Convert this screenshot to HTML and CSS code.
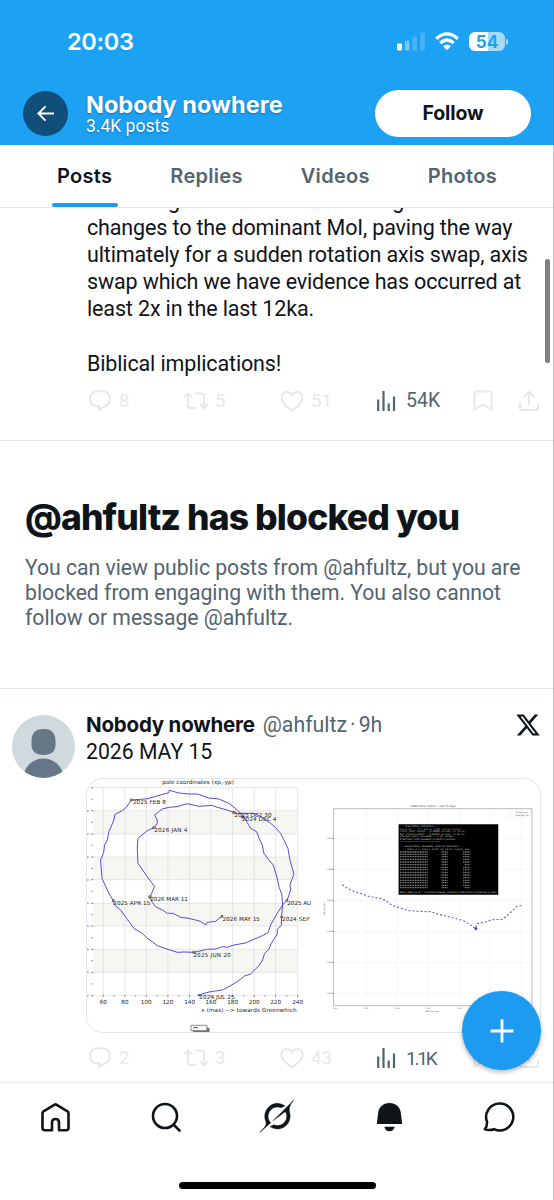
FILE: index.html
```html
<!DOCTYPE html>
<html lang="en">
<head>
<meta charset="utf-8">
<title>Nobody nowhere</title>
<link rel="stylesheet" href="styles.css">
</head>
<body>
<svg class="defs" width="0" height="0">
  <symbol id="reply" viewBox="0 0 24 24"><path fill="currentColor" d="M1.751 10c0-4.42 3.584-8 8.005-8h4.366c4.49 0 8.129 3.64 8.129 8.13 0 2.96-1.607 5.68-4.196 7.11l-8.054 4.46v-3.69h-.067c-4.49.1-8.183-3.51-8.183-8.01zm8.005-6c-3.317 0-6.005 2.69-6.005 6 0 3.37 2.77 6.08 6.138 6.01l.351-.01h1.761v2.3l5.087-2.81c1.951-1.08 3.163-3.13 3.163-5.36 0-3.39-2.744-6.13-6.129-6.13H9.756z"/></symbol>
  <symbol id="repost" viewBox="0 0 26 22"><path fill="none" stroke="currentColor" stroke-width="2" d="M1 7.500 5 3.200 9 7.500M5 4V15.500Q5 18 7.500 18H13M12 3.500H18.500Q21 3.500 21 6V17.500M17 14 21 18.300 25 14"/></symbol>
  <symbol id="heart" viewBox="0 0 24 22"><path fill="none" stroke="currentColor" stroke-width="2" d="M12 20.300C6 16.500 1.500 12.500 1.500 7.800 1.500 4.300 4 2 6.800 2 9.200 2 11 3.400 12 5.200 13 3.400 14.800 2 17.200 2 20 2 22.500 4.300 22.500 7.800 22.500 12.500 18 16.500 12 20.300Z"/></symbol>
  <symbol id="views" viewBox="0 0 19 22"><path fill="none" stroke="currentColor" stroke-width="2.200" d="M1.200 21V9.500M6.500 21V1M11.700 21V13.500M17 21V6.500"/></symbol>
  <symbol id="bookmark" viewBox="0 0 20 22"><path fill="none" stroke="currentColor" stroke-width="2" d="M1.500 19.800V3Q1.500 1.500 3 1.500H17Q18.500 1.500 18.500 3V19.800L10 14.500Z"/></symbol>
  <symbol id="share" viewBox="0 0 22 22"><path fill="none" stroke="currentColor" stroke-width="2" d="M11 15V2.500M5.500 7.500 11 2 16.500 7.500M2 13V18Q2 20 4 20H18Q20 20 20 18V13"/></symbol>
</svg>
<div class="screen">
  <header class="top">
    <div class="status">
      <span class="clock">20:03</span>
      <div class="status-icons">
        <svg class="signal" viewBox="0 0 29 19"><g fill="#fff"><rect x="0" y="11.500" width="5" height="7" rx="1.300"/><rect x="7.800" y="8.500" width="4.600" height="10" rx="1.300" opacity=".4"/><rect x="15.500" y="4.500" width="4.600" height="14" rx="1.300" opacity=".2"/><rect x="23.200" y=".5" width="4.600" height="18" rx="1.300" opacity=".2"/></g></svg>
        <svg class="wifi" viewBox="0 0 24 19"><g fill="none" stroke="#fff" stroke-width="3.200"><path d="M1.200 6.700Q12-3 22.800 6.700"/><path d="M5.200 11Q12 5 18.800 11"/></g><path fill="#fff" d="M12 18.300 8 14.300Q12 10.900 16 14.300Z"/></svg>
        <div class="battery"><span>54</span></div>
        <i class="nub"></i>
      </div>
    </div>
    <div class="profile">
      <div class="back"><svg viewBox="0 0 18 18"><path fill="none" stroke="#fff" stroke-width="2" d="M18 9H1.500M9 1.500 1.500 9 9 16.500"/></svg></div>
      <div class="who"><div class="who-name">Nobody nowhere</div><div class="who-count">3.4K posts</div></div>
      <div class="follow">Follow</div>
    </div>
  </header>
  <nav class="tabs">
    <div class="tab tab-on"><span>Posts</span></div>
    <div class="tab"><span>Replies</span></div>
    <div class="tab"><span>Videos</span></div>
    <div class="tab"><span>Photos</span></div>
  </nav>
  <article class="first">
    <div class="body-text">unloading channels often causing instant<br>changes to the dominant MoI, paving the way<br>ultimately for a sudden rotation axis swap, axis<br>swap which we have evidence has occurred at<br>least 2x in the last 12ka.<br><br>Biblical implications!</div>
    <div class="actions">
      <div class="act c1"><svg class="i-reply"><use href="#reply"/></svg><span>8</span></div>
      <div class="act c2"><svg class="i-repost"><use href="#repost"/></svg><span>5</span></div>
      <div class="act c3"><svg class="i-heart"><use href="#heart"/></svg><span>51</span></div>
      <div class="act c4"><svg class="i-views"><use href="#views"/></svg><span class="long">54K</span></div>
      <div class="act c5"><svg class="i-book"><use href="#bookmark"/></svg></div>
      <div class="act"><svg class="i-share"><use href="#share"/></svg></div>
    </div>
  </article>
  <section class="blocked">
    <h1>@ahfultz has blocked you</h1>
    <p>You can view public posts from @ahfultz, but you are<br>blocked from engaging with them. You also cannot<br>follow or message @ahfultz.</p>
  </section>
  <article class="second">
    <svg class="avatar" viewBox="0 0 63 63"><defs><clipPath id="av"><circle cx="31.500" cy="31.500" r="31.500"/></clipPath></defs><g clip-path="url(#av)"><path fill="#cfd9de" d="M0 0H63V63H0Z"/><path fill="#667788" d="M31.500 14C40 14 43.500 18.500 43.500 26V29C43.500 36 40 40 31.500 40S19.500 36 19.500 29V26C19.500 18.500 23 14 31.500 14Z"/><ellipse cx="31.500" cy="63" rx="20" ry="19.500" fill="#667788"/></g></svg>
    <div class="content">
      <div class="byline"><span class="name">Nobody nowhere</span><span class="handle">@ahfultz</span><span class="dot">·</span><span class="handle">9h</span>
        <svg class="xlogo" viewBox="0 0 24 24"><path d="M18.244 2.250h3.308l-7.227 8.260 8.502 11.240H16.170l-5.214-6.817L4.990 21.750H1.680l7.730-8.835L1.254 2.250H8.080l4.713 6.231zm-1.161 17.520h1.833L7.084 4.126H5.117z"/></svg></div>
      <div class="line">2026 MAY 15</div>
      <div class="media">
        <svg viewBox="87 779 453 253">
          <g transform="translate(80.600 770) scale(.33333)">
            <path fill="#f6f6f2" d="M36 122H651V192H36ZM36 261H651V329H36ZM36 400H651V468H36ZM36 538H651V607H36Z"/>
            <path fill="none" stroke="#dcdcdc" stroke-width="2" d="M36 53H651M36 122H651M36 192H651M36 261H651M36 329H651M36 400H651M36 468H651M36 538H651M36 607H651M36 677H651M68 53V677M133 53V677M197 53V677M262 53V677M327 53V677M391 53V677M456 53V677M521 53V677M585 53V677M651 53V677"/>
            <path fill="none" stroke="#555" stroke-width="2" d="M31 53H38M31 88H36M31 122H38M31 157H36M31 192H38M31 226H36M31 261H38M31 295H36M31 329H38M31 364H36M31 400H38M31 434H36M31 468H38M31 503H36M31 538H38M31 572H36M31 607H38M31 642H36M31 677H38M68 674V681M100 676V680M133 674V681M165 676V680M197 674V681M230 676V680M262 674V681M294 676V680M327 674V681M359 676V680M391 674V681M424 676V680M456 674V681M489 676V680M521 674V681M553 676V680M585 674V681M618 676V680M651 674V681M22 51V55M22 120V126M22 189V195M22 258V264M22 327V333M22 397V403M22 465V471M22 535V541M22 604V610M22 674V680"/>
            <path fill="none" stroke="#5a48d8" stroke-width="3" stroke-linejoin="round" d="M355 675 385 666 405 663 425 660 445 650 470 635 492 618 510 612 535 587 546 570 552 550 565 538 572 520 590 492 590 478 602 466 603 435 606 405 604 375 595 350 590 325 578 285 565 270 550 250 545 225 537 208 528 185 510 175 500 158 488 138 470 120 445 100 415 87 385 84 350 72 325 72 295 69 266 61 265 68 225 79 202 86 180 88 152 90 137 112 125 122 103 133 100 150 85 185 80 210 72 225 69 248 60 270 64 325 85 370 98 392 102 405 120 420 140 448 160 475 185 490 200 505 215 515 230 527 265 539 290 547 310 546 340 547 380 538 405 537 425 530 440 532 460 525 495 519 520 508 545 497 563 488 570 465 590 430 608 402 620 390 630 360 628 345 640 312 628 270 622 235 600 190 585 173 570 160 545 142 520 130 470 130 430 117 410 112 395 106 355 109 320 101 290 110 265 112 245 117 222 135 230 150 230 160 220 173 200 182 172 205 170 235 172 280 200 320 222 350 213 370 208 382 215 397 225 410 245 420 260 430 278 430 300 442 325 445 360 454 376 465 380 457 405 454 415 445 425 440"/>
            <g fill="#8a8a50" stroke="#333" stroke-width="1"><path d="M149 87h8v6h-8ZM216 170h8v6h-8ZM204 377h8v8h-8ZM95 389h6v6h-6ZM336 544h8v6h-8ZM421 436h6v6h-6ZM352 673h7v5h-7ZM600 438h6v6h-6ZM616 388h6v6h-6ZM456 124h8v7h-8ZM482 138h8v7h-8Z"/></g>
            <g class="plot-label">
              <text x="245" y="43" textLength="215">pole coordinates (xp,-yp)</text>
              <text x="157" y="102" textLength="99">2025 FEB 8</text>
              <text x="221" y="185" textLength="99">2026 JAN 4</text>
              <text x="461" y="140" textLength="112">2025 OCT 30</text>
              <text x="484" y="153" textLength="103">2024 DEC 4</text>
              <text x="209" y="392" textLength="113">2026 MAR 11</text>
              <text x="98" y="404" textLength="111">2025 APR 15</text>
              <text x="620" y="404" textLength="72">2025 AU</text>
              <text x="426" y="453" textLength="112">2026 MAY 15</text>
              <text x="604" y="453" textLength="83">2024 SEP</text>
              <text x="338" y="560" textLength="112">2025 JUN 20</text>
              <text x="356" y="688" textLength="106">2024 JUL 25</text>
              <g text-anchor="middle"><text x="68" y="702">60</text><text x="133" y="702">80</text><text x="197" y="702">100</text><text x="262" y="702">120</text><text x="327" y="702">140</text><text x="391" y="702">160</text><text x="456" y="702">180</text><text x="521" y="702">200</text><text x="585" y="702">220</text><text x="651" y="702">240</text></g>
              <text x="362" y="725" textLength="286">x (mas) --&gt; towards Greenwhich</text>
            </g>
            <path fill="#777" d="M337 773H387V790H337Z"/><path fill="#fff" stroke="#555" stroke-width="2" d="M331 766H379V782H331Z"/><path stroke="#4a35d0" stroke-width="3" d="M338 773H352"/>
          </g>
          <g transform="translate(315.600 795) scale(.33333)">
            <path fill="none" stroke="#f1f1f1" stroke-width="2" d="M54 130H649M54 223H649M54 316H649M54 409H649M54 502H649M54 595H649M152 41V632M245 41V632M338 41V632M431 41V632M524 41V632M617 41V632"/>
            <path fill="none" stroke="#9c9c9c" stroke-width="2" d="M54 41H649V632H54Z"/>
            <path fill="none" stroke="#555" stroke-width="2" d="M49 130H54M49 223H54M49 316H54M49 409H54M49 502H54M49 595H54"/>
            <path fill="none" stroke="#6666d8" stroke-width="3.500" stroke-dasharray="6 6" d="M80 269 97 281 115 289 140 297 162 305 195 310 210 316 225 328 240 335 260 341 280 347 310 349 345 350 365 357 395 364 430 373 445 378 465 390 480 401 484 386 510 381 530 374 560 373 580 357 605 333 622 331"/>
            <circle cx="481" cy="401" r="4" fill="#3333bb"/>
            <path fill="none" stroke="#ddd" d="M580 45H645V67H580Z"/>
            <g class="micro">
              <text x="285" y="37" class="micro-title" textLength="135">USNO Polar motion - last 51 days</text>
              <text x="600" y="54">51 days ago</text><text x="600" y="63">2026 May 15</text>
              <text x="34" y="133">0.50</text><text x="34" y="226">0.48</text><text x="34" y="319">0.46</text><text x="34" y="412">0.44</text><text x="34" y="505">0.42</text><text x="34" y="598">0.40</text>
              <text x="52" y="643">0.12</text><text x="145" y="643">0.13</text><text x="238" y="643">0.14</text><text x="331" y="643">0.15</text><text x="424" y="643">0.16</text>
              <text x="329" y="652">PM-X (arcsec)</text><text transform="translate(28 360) rotate(-90)">PM-Y (arcsec)</text>
            </g>
            <path d="M249 88H548V299H249Z"/>
            <g class="terminal">
              <text x="253" y="97" textLength="116">--- Polar Motion Statistics ---</text>
              <text x="253" y="104" textLength="184">Period           : 51 days (50 intervals)</text>
              <text x="253" y="111" textLength="194">Total path length      : 0.08004 arcsec (2.47 m)</text>
              <text x="253" y="119" textLength="194">Net displacement       : 0.06051 arcsec (1.86 m)</text>
              <text x="253" y="127" textLength="160">Average daily movement : 4.95 cm/day</text>
              <text x="253" y="134" textLength="166"># Reflects total movement on Earth's surface</text>
              <text x="253" y="142" textLength="120">===============================</text>
              <text x="253" y="157" textLength="192">--- Recent Daily Movements (last 15 intervals) ---</text>
              <text x="275" y="165" textLength="187">date      x      y   daily_dist_cm  daily_angle_deg</text>
            </g>
            <g stroke="#8c8c8c" stroke-width="4" stroke-dasharray="3 2">
              <path d="M253 171H336M378 171H398M443 171H464M253 178H336M378 178H398M443 178H464M253 185H336M378 185H398M443 185H464M253 193H336M378 193H398M443 193H464M253 201H336M378 201H398M443 201H464M253 209H336M378 209H398M448 209H464M253 217H336M378 217H398M443 217H464M253 224H336M378 224H398M443 224H464M253 232H336M378 232H398M443 232H464M253 240H336M378 240H398M443 240H464M253 248H336M378 248H398M443 248H464M253 256H336M378 256H398M443 256H464M253 263H336M378 263H398M443 263H464M253 271H336M378 271H398M443 271H464M253 278H336M378 278H398M448 278H464"/>
            </g>
            <g class="terminal"><text x="253" y="295" textLength="291">Daily angle is in ° (counterclockwise, relative to/direction of positive X axis)</text></g>
          </g>
        </svg>
      </div>
      <div class="actions">
        <div class="act c1"><svg class="i-reply"><use href="#reply"/></svg><span>2</span></div>
        <div class="act c2"><svg class="i-repost"><use href="#repost"/></svg><span>3</span></div>
        <div class="act c3"><svg class="i-heart"><use href="#heart"/></svg><span>43</span></div>
        <div class="act c4"><svg class="i-views"><use href="#views"/></svg><span class="short">1.1K</span></div>
        <div class="act c5"><svg class="i-book"><use href="#bookmark"/></svg></div>
        <div class="act"><svg class="i-share"><use href="#share"/></svg></div>
      </div>
    </div>
  </article>
  <footer class="dock">
    <div class="dock-row">
      <svg viewBox="0 0 32 32"><path fill="none" stroke="#0f1419" stroke-width="2.600" stroke-linejoin="round" d="M13 29.300V21.500Q13 18 16.500 18T20 21.500V29.300H27Q29.500 29.300 29.500 26.800V12.200Q29.500 11 28.500 10.300L17.700 3.800Q16.500 3 15.300 3.800L4.500 10.300Q3.500 11 3.500 12.200V26.800Q3.500 29.300 6 29.300Z"/></svg>
      <svg viewBox="0 0 32 32"><path fill="none" stroke="#0f1419" stroke-width="2.600" d="M15 3A12 12 0 1 1 15 27 12 12 0 1 1 15 3ZM23.500 23.500 30.300 30.300"/></svg>
      <svg class="grok" viewBox="0 0 24 24"><path fill="#0f1419" stroke="#0f1419" stroke-width=".3" d="M9.270 15.290l7.978-5.897c.391-.29.95-.177 1.137.272.98 2.369.542 5.215-1.410 7.169-1.951 1.954-4.667 2.382-7.149 1.406l-2.711 1.257c3.889 2.661 8.611 2.003 11.562-.953 2.341-2.344 3.066-5.539 2.388-8.420l.006.007c-.983-4.232.242-5.924 2.750-9.383.06-.082.12-.164.179-.248l-3.301 3.305v-.01L9.267 15.292M7.623 16.723c-2.792-2.670-2.310-6.801.071-9.184 1.761-1.763 4.647-2.483 7.166-1.425l2.705-1.250a7.808 7.808 0 00-1.829-1A8.975 8.975 0 005.984 5.830c-2.533 2.536-3.330 6.436-1.962 9.764 1.022 2.487-.653 4.246-2.340 6.022-.599.63-1.199 1.259-1.682 1.925l7.620-6.815"/></svg>
      <svg viewBox="0 0 32 32"><path fill="#0f1419" d="M16.500 2C23 2 27.500 6.300 27.900 12.500L29.200 23H3.800L5.100 12.500C5.500 6.300 10 2 16.500 2ZM11.300 25.700H21.700Q20.500 30.200 16.500 30.200T11.300 25.700Z"/></svg>
      <svg viewBox="0 0 32 32"><path fill="none" stroke="#0f1419" stroke-width="2.500" stroke-linejoin="round" d="M16.500 2.500A13.500 13.500 0 1 1 11 28.200Q6.500 29.800 1.800 28.400 4.200 25.500 4.100 21A13.500 13.500 0 0 1 16.500 2.500Z"/></svg>
    </div>
    <div class="home-bar"></div>
  </footer>
  <div class="fab"><svg viewBox="0 0 24 24"><path stroke="#fff" stroke-width="2.800" d="M12 .5V23.500M.5 12H23.500"/></svg></div>
  <div class="scroll-thumb"></div>
  <div class="edge"></div>
</div>
</body>
</html>
```

FILE: styles.css
```css
* { box-sizing: border-box; }
body { margin: 0; background: #fff; color: #0f1419; font-family: Roboto, "Liberation Sans", sans-serif; }
svg { display: block; flex: none; }
.defs { position: absolute; }
.screen { position: relative; width: 554px; height: 1200px; overflow: hidden; display: flex; flex-direction: column; }

.top { height: 145px; flex: none; background: #1da1f2; color: #fff; }
.status { height: 82px; display: flex; justify-content: space-between; padding: 27px 46px 0 67px; }
.clock { font: 600 23.500px/29px Inter, sans-serif; letter-spacing: -.3px; }
.status-icons { display: flex; align-items: flex-start; padding-top: 5px; }
.signal { width: 29px; height: 19px; }
.wifi { width: 24px; height: 19px; margin: 0 10px 0 9px; }
.battery { width: 36px; height: 19px; border-radius: 6px; background: linear-gradient(90deg, #fff 54%, #a5d9fa 54%); color: #1da1f2; text-align: center; font: 700 17px/20px Inter, sans-serif; }
.nub { width: 2px; height: 6px; margin: 7px 0 0 1px; border-radius: 0 2px 2px 0; background: #a5d9fa; }
.profile { display: flex; align-items: center; padding: 8px 23px 0; }
.back { width: 45px; height: 45px; border-radius: 50%; background: #0f4f79; display: flex; align-items: center; justify-content: center; }
.back svg { width: 17px; height: 17px; }
.who { flex: 1; margin-left: 18px; text-shadow: 0 1px 2px rgba(0,40,80,.4); white-space: nowrap; }
.who-name { font: 700 23.500px/25px Inter, sans-serif; letter-spacing: 0; }
.who-count { font-size: 17.500px; line-height: 18px; }
.follow { width: 156px; height: 47px; border-radius: 24px; background: #fff; color: #0f1419; text-align: center; font: 700 19.500px/47px Inter, sans-serif; letter-spacing: -.1px; }

.tabs { height: 63px; flex: none; display: flex; padding: 0 44px; justify-content: space-between; border-bottom: 1px solid #e3e8eb; font: 600 20px Inter, sans-serif; letter-spacing: .3px; color: #536471; }
.tab { height: 62px; line-height: 63px; padding: 0 13px; }
.tab-on { color: #0f1419; position: relative; }
.tab-on::after { content: ""; position: absolute; left: 8px; right: 7px; bottom: 0; height: 4px; border-radius: 2px; background: #1d9bf0; }

.first { height: 233px; flex: none; overflow: hidden; padding-left: 87px; border-bottom: 1px solid #e3e8eb; }
.body-text { margin-top: -20.900px; font-size: 21.500px; line-height: 27.100px; letter-spacing: -.14px; white-space: nowrap; }
.actions { display: flex; height: 28px; align-items: center; color: #e4e9ed; font-size: 18.500px; }
.first .actions { margin-top: 10.200px; }
.act { display: flex; align-items: center; }
.c1 { width: 96px; } .c2 { width: 97px; } .c3 { width: 97px; } .c4 { width: 96px; color: #536471; } .c5 { width: 45px; }
.i-reply { width: 26px; height: 26px; margin-right: 6px; }
.i-repost { width: 26px; height: 22px; margin-right: 6px; }
.i-heart { width: 24px; height: 22px; margin-right: 7px; }
.i-views { width: 19px; height: 22px; margin-right: 10px; }
.i-book { width: 20px; height: 22px; }
.i-share { width: 22px; height: 22px; }
.long { font-size: 19.500px; }
.short { font-size: 19px; letter-spacing: -2.200px; }

.blocked { height: 248px; flex: none; padding: 55px 25px 0; border-bottom: 1px solid #e3e8eb; white-space: nowrap; }
.blocked h1 { margin: 0; font: 800 35.500px/44px Inter, sans-serif; letter-spacing: -.87px; }
.blocked p { margin: 14.500px 0 0; font-size: 21.200px; line-height: 25.300px; letter-spacing: -.02px; color: #536471; }

.second { height: 393px; flex: none; display: flex; padding: 26px 0 0 12px; }
.avatar { width: 63px; height: 63px; }
.content { margin: -4px 0 0 11px; width: 455px; }
.byline { display: flex; height: 27px; align-items: center; font-size: 21.300px; white-space: nowrap; }
.name { font: 700 20.500px/28px Inter, sans-serif; letter-spacing: -.2px; margin-right: 8px; }
.handle, .dot { color: #536471; }
.dot { margin: 0 3px; }
.xlogo { width: 26px; height: 26px; margin-left: auto; fill: #0f1419; }
.line { font-size: 21.200px; line-height: 28px; }
.media { width: 455px; height: 255px; margin-top: 12px; border: 1px solid #e1e7ea; border-radius: 17px; overflow: hidden; }
.media svg { width: 453px; height: 253px; }
.plot-label { font: 17px "DejaVu Sans", sans-serif; fill: #222; }
.micro { font: 6px "DejaVu Sans", sans-serif; fill: #444; }
.micro-title { font-size: 8px; }
.terminal { font: 7px "DejaVu Sans Mono", monospace; fill: #ccc; }
.second .actions { margin: 11px 0 0 1px; }

.dock { height: 119px; flex: none; position: relative; background: #fff; border-top: 1px solid #e3e8eb; display: flex; flex-direction: column; align-items: center; justify-content: space-between; padding: 18px 0 12px; }
.dock-row { width: 100%; display: flex; justify-content: space-between; padding: 0 39px; }
.dock-row svg { width: 32px; height: 32px; }
.dock-row .grok { width: 34px; height: 34px; margin-top: -2px; }
.home-bar { width: 197px; height: 7px; border-radius: 4px; background: #000; }
.fab { position: absolute; left: 462px; top: 991px; width: 79px; height: 79px; border-radius: 50%; background: #1d9bf0; display: flex; align-items: center; justify-content: center; box-shadow: 0 2px 5px rgba(0,0,0,.3); }
.fab svg { width: 24px; height: 24px; }
.scroll-thumb { position: absolute; left: 545px; top: 259px; width: 5px; height: 104px; border-radius: 3px; background: #7f7f7f; }
.edge { position: absolute; right: 0; top: 0; width: 1px; height: 1200px; background: rgba(90,90,90,.35); }
```
